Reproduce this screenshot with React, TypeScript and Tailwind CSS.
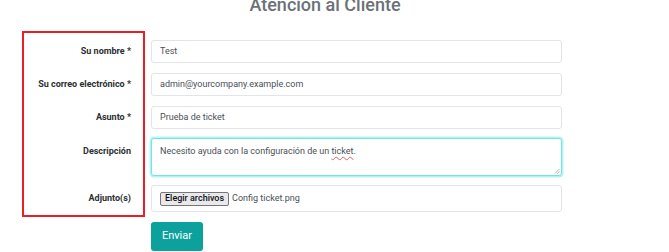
import React from 'react';

const rows = [
  { label: 'Su nombre *', value: 'Test', mt: 'mt-0' },
  { label: 'Su correo electrónico *', value: 'admin@yourcompany.example.com', mt: 'mt-[10px]' },
  { label: 'Asunto *', value: 'Prueba de ticket', mt: 'mt-[10px]' },
];

const App: React.FC = () => {
  return (
    <div className="relative w-[669px] h-[252px] overflow-hidden bg-white font-['Roboto','Liberation_Sans',sans-serif]">
      <h2 className="-mt-[5px] pr-[19px] text-center text-[18px] leading-[20px] font-medium text-[#6c7177]">
        Atención al Cliente
      </h2>

      <div className="mt-[25px] flex flex-col">
        {rows.map((r) => (
          <div key={r.label} className={`flex items-center ${r.mt}`}>
            <label className="w-[131px] shrink-0 text-right text-[9px] font-bold text-[#2b2f33]">{r.label}</label>
            <div className="ml-[20px] flex h-[23px] w-[411px] items-center rounded-[3px] border border-[#e1e5ea] bg-white px-[8px] text-[9px] text-[#4a5056]">
              {r.value}
            </div>
          </div>
        ))}

        <div className="mt-[9px] flex items-start">
          <label className="w-[131px] shrink-0 pt-[7px] text-right text-[9px] font-bold text-[#2b2f33]">Descripción</label>
          <div className="relative ml-[20px] h-[38px] w-[411px] rounded-[3px] border border-[#72e4e9] bg-white px-[8px] pt-[6px] text-[9px] text-[#4a5056] shadow-[0_0_0_1.5px_#b6f3f5]">
            Necesito ayuda con la configuración de un{' '}
            <span className="underline decoration-wavy decoration-[#e06060] decoration-1 underline-offset-2">ticket</span>.
            <svg className="absolute right-[1px] bottom-[1px]" width="6" height="6" viewBox="0 0 6 6">
              <path d="M5.5 1 L1 5.5 M5.5 3.5 L3.5 5.5" stroke="#9a9a9a" strokeWidth="0.8" />
            </svg>
          </div>
        </div>

        <div className="mt-[9px] flex items-center">
          <label className="w-[131px] shrink-0 text-right text-[9px] font-bold text-[#2b2f33]">Adjunto(s)</label>
          <div className="ml-[20px] flex h-[27px] w-[411px] items-center gap-[3px] rounded-[3px] border border-[#e1e5ea] bg-white px-[8px] text-[9px] text-[#4a5056]">
            <span className="flex h-[14px] items-center rounded-[2px] border border-[#767676] bg-[#e9e9ed] px-[4px] font-medium text-[#111]">
              Elegir archivos
            </span>
            <span>Config ticket.png</span>
          </div>
        </div>

        <div className="mt-[10px] flex">
          <div className="w-[131px] shrink-0" />
          <button className="ml-[20px] flex h-[29px] w-[52px] items-center justify-center rounded-[3px] bg-[#0ca19c] text-[11px] text-white">
            Enviar
          </button>
        </div>
      </div>

      <div className="absolute left-[22px] top-[31px] h-[186px] w-[123px] border-2 border-[#ee1c25]" />
    </div>
  );
};

export default App;
